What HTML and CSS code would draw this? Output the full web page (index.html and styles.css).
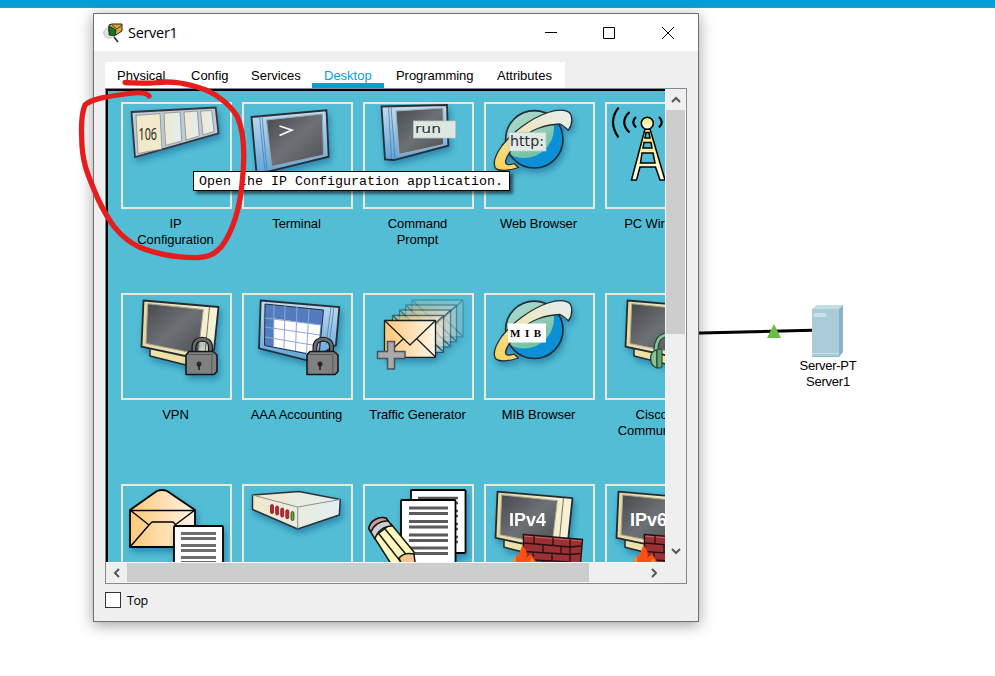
FILE: index.html
```
<!DOCTYPE html>
<html lang="en">
<head>
<meta charset="utf-8">
<title>Server1</title>
<link rel="stylesheet" href="styles.css">
</head>
<body>
<svg class="defs" width="0" height="0">
  <defs>
    <linearGradient id="screen" x1="0" y1="0" x2="1" y2="1"><stop offset="0" stop-color="#47494d"/><stop offset=".5" stop-color="#6d7074"/><stop offset="1" stop-color="#4d5053"/></linearGradient>
    <linearGradient id="blue" x1="0" y1="0" x2="0" y2="1"><stop offset="0" stop-color="#c2dcf1"/><stop offset="1" stop-color="#5ea5dc"/></linearGradient>
    <linearGradient id="cream" x1="0" y1="0" x2="1" y2="0"><stop offset="0" stop-color="#e6d8a4"/><stop offset="1" stop-color="#f8f3da"/></linearGradient>
    <linearGradient id="mail" x1="0" y1="0" x2="1" y2="0"><stop offset="0" stop-color="#ffc877"/><stop offset="1" stop-color="#fff4e8"/></linearGradient>
    <linearGradient id="box" x1="0" y1="0" x2="1" y2="0"><stop offset="0" stop-color="#f0e8cc"/><stop offset="1" stop-color="#e2eff2"/></linearGradient>
    <linearGradient id="ring" x1="0" y1="1" x2="1" y2="0"><stop offset="0" stop-color="#f8d14e"/><stop offset=".5" stop-color="#eee6bb"/><stop offset="1" stop-color="#e4eff3"/></linearGradient>
    <linearGradient id="sea" x1=".2" y1="0" x2=".7" y2="1"><stop offset="0" stop-color="#b5d8dc"/><stop offset=".5" stop-color="#9fd3bf"/><stop offset="1" stop-color="#6cc0a0"/></linearGradient>
    <linearGradient id="mast" x1="0" y1="0" x2="0" y2="1"><stop offset="0" stop-color="#f8e66d"/><stop offset="1" stop-color="#fffdf0"/></linearGradient>
    <clipPath id="ball"><circle cx="534.3" cy="139.3" r="28"/></clipPath>
    <g id="globe" stroke-linejoin="round">
      <circle cx="534.3" cy="139.3" r="28.7" fill="#0b8fd6"/>
      <circle cx="524" cy="128" r="30" fill="url(#sea)" clip-path="url(#ball)"/>
      <circle cx="534.3" cy="139.3" r="28.7" fill="none" stroke="#262c31" stroke-width="1.6"/>
      <path d="M571.3 116C570 109.5 560 108.5 548 112.5C530 118.500 512 133 502 145.500C496 154 492.500 163 495.500 168C499 171.800 510 170.500 518.500 167.500L514 163.500C509 165.500 505.500 165 505.500 161.500C507 154 514 146 522 138.500C530 130 545 124.500 560 124C563 125 566 128 568.300 130.300C571.500 126 572.500 121 571.300 116Z" fill="url(#ring)" stroke="#262c31" stroke-width="1.3"/>
    </g>
    <g id="monitor" stroke="#252a2e" stroke-linejoin="round">
      <path d="M150 348V356L190 366L206 360V346Z" fill="#eee0a9" stroke-width="1.500"/>
      <path d="M143.500 300.500L218.500 307L214 350L190 357L141.500 346.700Z" fill="url(#cream)" stroke-width="1.800"/>
      <path d="M147.700 303.700L203.300 309.500L198 354L146 343.500Z" fill="url(#screen)" stroke="#aaa78d" stroke-width="1"/>
      <path d="M209.500 306.500L205 353" stroke="#6b654f" stroke-width=".9" fill="none"/>
    </g>
    <g id="padlock" stroke="#171717">
      <path d="M194 354V347C194 336.500 210.500 336.500 210.500 347V354" fill="none" stroke-width="5"/>
      <path d="M194 354V347C194 336.500 210.500 336.500 210.500 347V354" fill="none" stroke="#696969" stroke-width="2.600"/>
      <path d="M189 351.500H213L217 355V371.500L214 374.500H186V355Z" fill="#808080" stroke-width="1.600" stroke-linejoin="round"/>
      <path d="M187 354.500H211.500L216 352.500M211.800 355V374" stroke="#4b4b4b" stroke-width=".8" fill="none"/>
      <circle cx="199" cy="364" r="2.500" fill="#292929" stroke="none"/><path d="M199 365V370" stroke-width="1.500"/>
    </g>
    <g id="firewall">
      <use href="#monitor" x="354" y="191.200"/>
      <text x="509" y="525.700" textLength="37" lengthAdjust="spacingAndGlyphs" class="ip-text">IPv4</text>
    </g>
    <g id="bricks">
      <path d="M523.300 534.500L582.500 539.500L580 570H524Z" fill="#9b3135" stroke="#221011" stroke-width="1.400"/>
      <path d="M524 536L582 541" stroke="#c0656a" stroke-width="1.200"/>
      <path d="M524 543L570 547L581 546M524 551.500L570 554.500L580 553.500M524 559.500L570 562M570 539V563M534 536V543.500M553 538V545.500M543 545V552M561 546.500V553.500M533 552V559.500M552 553.500V561M543 561V564" fill="none" stroke="#241112" stroke-width="1.300"/>
      <path d="M512 563L517 554L519 559C517 553 522 550 522 545C526 549 528 553 526 558L531 554L537 563Z" fill="#ff4f12"/>
      <path d="M512 563L516 556V563M529 563L532 558L535 563" fill="#ff8a28"/>
    </g>
  </defs>
</svg>

<div class="topbar"></div>

<svg class="network" width="200" height="60" viewBox="690 300 200 60">
  <path d="M690 333.300L812 330.300" stroke="#000" stroke-width="3"/>
  <path d="M774 324L781 338H767Z" fill="#69bd45"/>
  <path d="M812 309L817 305H843L839 309Z" fill="#c4dde5"/>
  <path d="M839 309L843 305V352L839 357Z" fill="#85b5c4"/>
  <path d="M812 309H839V357H812Z" fill="#aaccd8"/>
  <path d="M812 353.500H839" stroke="#c5dfe6" stroke-width="1"/>
  <path d="M812 356.500H839" stroke="#8abccc" stroke-width="1"/>
  <rect x="814" y="313" width="12" height="4" fill="#cae0e8"/>
</svg>
<div class="node-label">Server-PT<br>Server1</div>

<main class="window">
  <header class="titlebar">
    <svg class="app-icon" width="20" height="20" viewBox="103 22 20 20">
      <circle cx="109" cy="32" r="5.300" fill="#dfe3df" stroke="#c2c7c3"/>
      <path d="M109 24L112 23H122V30L116 34L109 31Z" fill="#d9a640" stroke="#252015" stroke-width="1"/>
      <path d="M112 24L117 28L122 24" fill="none" stroke="#5c451c"/>
      <path d="M109 25L116 29L115 35L109 34Z" fill="#147324" stroke="#0b2b10" stroke-width=".8"/>
      <path d="M114 36L118 41" stroke="#29343b" stroke-width="1.700"/>
    </svg>
    <h1>Server1</h1>
    <svg class="window-controls" width="132" height="20" viewBox="545 22 132 20" fill="none" stroke="#000" stroke-width="1">
      <path d="M545 31.500H557M603.500 26.500H614.500V37.500H603.500Z"/><path d="M662 26L674 38M674 26L662 38"/>
    </svg>
  </header>
  <section class="content">
    <nav class="tabs">
      <span>Physical</span><span>Config</span><span>Services</span><span class="active">Desktop</span><span>Programming</span><span>Attributes</span>
    </nav>
    <div class="panel">
      <div class="viewport">
        <div class="apps">
          <div class="app"><svg class="tile" viewBox="121 102 111 107">
            <g class="lift"><path d="M131.500 112L215.700 107.500L218.500 133.300L135 157Z" fill="#bdcbd8" stroke="#33383d" stroke-width="1.800"/>
            <g fill="url(#box)" stroke="#858a8c" stroke-width=".8"><path d="M136 115.500L160 113.500L162 149L138 153.500Z" fill="#f1e9ca"/><path d="M164 113.300L180 112L181.700 141L165.500 145.500Z"/><path d="M184 112L197.300 111L199.300 136L186 140Z"/><path d="M200.500 111L211.700 110.500L214 131.500L203 135Z"/></g></g>
            <text x="138.500" y="139.500" textLength="18.500" lengthAdjust="spacingAndGlyphs" class="number">106</text>
          </svg><p>IP<br>Configuration</p></div>
          <div class="app"><svg class="tile" viewBox="242 102 111 107">
            <g class="lift" stroke="#282e34"><path d="M251.500 117L326.500 110.300L328.700 156.700L268 171.500L256.500 173Z" fill="url(#blue)" stroke-width="1.800"/>
            <path d="M259.500 116.500L265 171M262 116L267 171" stroke="#5080a5" stroke-width=".8"/>
            <path d="M266.500 120L322.300 114L323.500 155L271.700 166.500Z" fill="url(#screen)" stroke="#9ba6ae"/></g>
            <path d="M279.500 126L292 130L279.500 135.500" fill="none" stroke="#fff" stroke-width="1.600"/>
          </svg><p>Terminal</p></div>
          <div class="app"><svg class="tile" viewBox="363 102 111 107">
            <g class="lift" stroke="#282e34"><path d="M381.500 106.500L447 105L448.300 145.700L394 160L385 159.500Z" fill="url(#blue)" stroke-width="1.800"/>
            <path d="M391 107L395 159M388.500 107L391.500 159" stroke="#537b98" stroke-width=".8"/>
            <path d="M396 111L443 108L443.500 144.500L399 154.500Z" fill="url(#screen)" stroke="#a8b0b6"/></g>
            <rect x="413.500" y="121" width="42" height="17" fill="#dfe8df" stroke="#b0c8cc" stroke-width=".8"/><text x="415" y="133" textLength="26" lengthAdjust="spacingAndGlyphs" class="run">run</text>
          </svg><p>Command<br>Prompt</p></div>
          <div class="app"><svg class="tile" viewBox="484 102 111 107">
            <use href="#globe" class="lift"/><rect x="509" y="132.500" width="37" height="18.500" fill="#e1ebe5" stroke="#b8c8c2" stroke-width=".8"/><text x="510" y="145.700" textLength="34" lengthAdjust="spacingAndGlyphs" class="http">http:</text>
          </svg><p>Web Browser</p></div>
          <div class="app"><svg class="tile" viewBox="605 102 111 107">
            <g fill="none" stroke="#000" stroke-width="2.200"><path d="M618.500 107.700Q607.500 122 618.500 137.500M629.500 112Q619 122 629.500 132.500M636 117Q630.500 122 636 127.500M659 117Q664.500 122 659 127.500M665.500 112Q675 122 665.500 132.500"/></g>
            <g stroke="#000" stroke-width="1.500" fill="url(#mast)"><path fill-rule="evenodd" d="M645 129H650L665 180H660L655.500 167H640L636.500 180H631.500ZM646 132.500L645 138H650L649 132.500ZM644 142.500L643 148H652L651 142.500ZM642 153L640.500 163H655L653 153Z"/><circle cx="647.300" cy="123.300" r="6"/></g>
          </svg><p>PC Wireless</p></div>

          <div class="app"><svg class="tile" viewBox="121 293 111 107"><use href="#monitor" class="lift"/><use href="#padlock" class="lift"/></svg><p>VPN</p></div>
          <div class="app"><svg class="tile" viewBox="242 293 111 107">
            <g class="lift" stroke="#282e34"><path d="M260.700 300.500L339.300 307L336 345L310 361L259 348.300Z" fill="url(#blue)" stroke-width="1.800"/><path d="M331 307L326 345M334 307L329 345" stroke="#557fa0" stroke-width=".8"/>
            <path d="M265 304L323.500 310L319 356L264.500 345.500Z" fill="#527cc0" stroke-width="1"/></g>
            <path d="M274 318.500L320.500 325L317.500 355L273.500 346.500Z" fill="#fff"/>
            <path d="M274 305L273.500 347M285 306L284 349M297 307L295.500 351M309 309L306.500 354M265 318L321 325M265 327L320 335M265 337L318 346" stroke="#91a7d3" fill="none" stroke-width="1"/>
            <use href="#padlock" x="121"/>
          </svg><p>AAA Accounting</p></div>
          <div class="app"><svg class="tile" viewBox="363 293 111 107">
            <defs><g id="envelope"><path d="M384.500 320.500H435.500V357.300H384.500Z" fill="url(#mail)"/><path d="M384.500 320.500L410 345L435.500 320.500M384.500 357L403 339M435.500 357L417 339" fill="none"/></g></defs>
            <g class="lift" stroke="#16201f" stroke-width="1.300" stroke-linejoin="round"><use href="#envelope" x="27.500" y="-20.500" opacity=".22"/><use href="#envelope" x="21" y="-15.500" opacity=".3"/><use href="#envelope" x="15" y="-10.500" opacity=".4"/><use href="#envelope" x="8" y="-5" opacity=".55"/><use href="#envelope"/></g>
            <path d="M387.500 341.500H394.500V351.500H405V358.500H394.500V369H387.500V358.500H377.500V351.500H387.500Z" fill="#aaa" stroke="#49525a" stroke-width="1.500"/>
          </svg><p>Traffic Generator</p></div>
          <div class="app"><svg class="tile" viewBox="484 293 111 107"><use href="#globe" y="190.500" class="lift"/><rect x="508" y="323.500" width="38" height="19" fill="#fff"/><text x="510" y="337" textLength="31" class="mib">MIB</text></svg><p>MIB Browser</p></div>
          <div class="app"><svg class="tile" viewBox="605 293 111 107">
            <use href="#monitor" x="484" class="lift"/><path d="M656 350C656 341 659 335 670 334" fill="none" stroke="#204a38" stroke-width="5"/><path d="M656 350C656 341 659 335 670 334" fill="none" stroke="#8ac39a" stroke-width="2.800"/>
            <path d="M657 350C649 350 648 365 657 368Z" fill="#8bc396" stroke="#214b37" stroke-width="1.300"/><rect x="657" y="349" width="5" height="19" rx="2" fill="#65a375" stroke="#193d2a"/>
          </svg><p>Cisco IP<br>Communicator</p></div>

          <div class="app"><svg class="tile" viewBox="121 484 111 107">
            <g class="lift" stroke="#000" stroke-width="1.800" stroke-linejoin="round"><path d="M130 510L157 491Q162 489 167 491L195 510V547H130Z" fill="url(#mail)"/><path d="M130 510.500H195M130 510L149 525L130 547M195 510L175 525L195 547M149 525L152 522H173L176 525" fill="none" stroke-width="1.400"/></g>
            <g class="lift"><rect x="174" y="526" width="49" height="60" rx="1" fill="#fff" stroke="#000" stroke-width="1.800"/></g><path d="M181 533.500H216M181 538.500H216M181 545.500H216M181 550.500H216M181 557.500H216M181 562.500H216" stroke="#6d6d6d" stroke-width="3"/>
          </svg></div>
          <div class="app"><svg class="tile" viewBox="242 484 111 107"><g class="lift" stroke="#2c3337" stroke-width="1.500" stroke-linejoin="round"><path d="M252.500 495L299 491.500L340.300 499.500L339.300 515L297.700 529L252.500 509.500Z" fill="url(#box)"/><path d="M252.500 495L297.700 507L340 499.500M297.700 507V529" stroke="#8b918b" stroke-width="1" fill="none"/></g>
            <g fill="#d51e2b" stroke="#571c21" stroke-width=".7"><rect x="270.500" y="504.500" width="3" height="9" rx="1.500"/><rect x="275.600" y="506" width="3" height="9" rx="1.500"/><rect x="280.700" y="508" width="3" height="9" rx="1.500"/><rect x="285.800" y="509.700" width="3" height="9" rx="1.500"/><rect x="291" y="511.500" width="3" height="9" rx="1.500" fill="#43b72d"/></g>
          </svg></div>
          <div class="app"><svg class="tile" viewBox="363 484 111 107">
            <g class="lift" fill="#fff" stroke="#000" stroke-width="1.800"><rect x="411" y="490" width="54.500" height="63" rx="1"/><path d="M418 498H458M418 503H458M418 511H458M418 516H458M418 524H458M418 529H458M418 537H458M418 542H458" stroke="#555" stroke-width="2.500"/><rect x="401" y="500" width="54.500" height="70" rx="1"/></g>
            <path d="M409 508H448M409 513.500H448M409 521.500H448M409 527H448M409 535H448M409 540.500H448M409 548H448M409 553.500H448" stroke="#5b5b5b" stroke-width="3"/>
            <g stroke="#171717" stroke-width="1.500" stroke-linejoin="round"><path d="M374 537L391 524L414 552V570H395Z" fill="#fff8bd"/><path d="M379 534L404 566M385 529L409 558" fill="none"/><path d="M399 558Q404 552 414 554L416 570H404Z" fill="#f7c28f"/><path d="M369 529C369 521 379 516 386 518L392 526C384 526 377 531 375 539Z" fill="#cfcfd2"/><path d="M369 529C369 521 379 516 386 518L388 521C380 520 373 526 371 532Z" fill="#ca9c9a"/></g>
          </svg></div>
          <div class="app"><svg class="tile" viewBox="484 484 111 107"><use href="#firewall" class="lift"/><use href="#bricks"/></svg></div>
          <div class="app"><svg class="tile" viewBox="605 484 111 107"><use href="#monitor" x="475" y="191.200" class="lift"/><text x="630" y="525.700" textLength="37" lengthAdjust="spacingAndGlyphs" class="ip-text">IPv6</text><use href="#bricks" x="121"/></svg></div>
        </div>
      </div>
      <div class="scroll-y"><i class="arrow"><svg width="10" height="7" viewBox="0 0 10 7"><path d="M1 6L5 2L9 6"/></svg></i><div class="thumb-y"></div><i class="arrow end"><svg width="10" height="7" viewBox="0 0 10 7"><path d="M1 1L5 5L9 1"/></svg></i></div>
      <div class="scroll-x"><i class="arrow"><svg width="7" height="10" viewBox="0 0 7 10"><path d="M6 1L2 5L6 9"/></svg></i><div class="thumb-x"></div><i class="arrow end"><svg width="7" height="10" viewBox="0 0 7 10"><path d="M1 1L5 5L1 9"/></svg></i></div>
      <div class="corner"></div>
    </div>
    <label class="top-option"><span class="checkbox"></span>Top</label>
  </section>
</main>
<div class="tooltip">Open the IP Configuration application.</div>
<svg class="marker" width="180" height="190" viewBox="75 75 180 190"><path d="M125 82.500C138 83 149 84 158 82.500C172 81 182 83 197 87C216 92 230 105 237 116C245 133 245 158 242 184C240 207 233 231 222 246C214 255 208 257 198 257.500C179 258 161 256 139 247C119 237 109 222 98 199C88 175 82 164 81.700 138C81 122 82 112 85 105C92 99 105 97 122 94.500C136 92 146 92 149 96"/></svg>
</body>
</html>
```
FILE: styles.css
```
* { box-sizing: border-box; }
body { margin: 0; width: 995px; height: 676px; overflow: hidden; position: relative; background: #fff; color: #000; font-family: "Liberation Sans", sans-serif; font-size: 13px; }
.defs { position: absolute; }
.topbar { height: 8px; background: #049fd9; border-bottom: 1px solid #4b91ad; }
.window { width: 606px; height: 609px; margin: 5px 0 0 93px; border: 1px solid #707070; background: #efefef; box-shadow: 0 3px 14px rgba(0,0,0,.38); position: relative; }
.titlebar { height: 37px; background: #fff; display: flex; align-items: center; padding: 0 21px 0 9px; }
.titlebar h1 { margin: 0 auto 0 5px; font: 14.5px/20px "Open Sans", sans-serif; letter-spacing: -.3px; }
.content { padding: 11px; }
.tabs { width: 460px; height: 26px; background: #fff; display: flex; }
.tabs span { padding: 6px 12px 0; line-height: 16px; white-space: nowrap; }
.tabs span:nth-child(1) { width: 74px; }
.tabs span:nth-child(2) { width: 60px; }
.tabs span:nth-child(3) { width: 73px; }
.tabs span:nth-child(4) { width: 72px; }
.tabs span:nth-child(5) { width: 101px; letter-spacing: -.05px; }
.tabs .active { color: #049fd9; border-bottom: 5px solid #049fd9; }
.panel { width: 582px; height: 496px; border: 1px solid #828790; display: grid; grid-template: 473px 21px / 559px 21px; }
.viewport { overflow: hidden; border: solid #000; border-width: 2px 0 0 2px; background: #53bdd5; }
.apps { width: 700px; padding: 11px 13px; display: grid; grid-template-columns: repeat(5, 111px); grid-auto-rows: 191px; column-gap: 10px; }
.tile { display: block; width: 111px; height: 107px; box-shadow: inset 0 0 0 2px #eae9d8; }
.app p { margin: 7px -4px 0 -6px; text-align: center; line-height: 16px; font-size: 13px; letter-spacing: -.07px; white-space: nowrap; }
.lift { filter: drop-shadow(2px 4px 3px rgba(0,74,130,.45)); }
.number { font: 16px "Noto Sans", sans-serif; fill: #282622; }
.run { font: 13px "DejaVu Sans", sans-serif; fill: #292d32; }
.http { font: 14px "DejaVu Sans", sans-serif; fill: #292d32; }
.mib { font: bold 11px "Liberation Serif", serif; }
.ip-text { font: bold 18px "Liberation Sans", sans-serif; fill: #fff; }
.scroll-y { border: 1px solid #f7f7f7; border-width: 0 1px; background: #efefef; display: flex; flex-direction: column; }
.scroll-x { border: 1px solid #f7f7f7; border-width: 1px 0; background: #efefef; display: flex; }
.arrow { flex: 0 0 21px; display: flex; align-items: center; justify-content: center; }
.arrow svg { fill: none; stroke: #555; stroke-width: 2; }
.thumb-y { height: 224px; background: #cdcdcd; }
.thumb-x { width: 462px; background: #cdcdcd; }
.end { margin-top: auto; }
.scroll-x .end { margin: 0 0 0 auto; }
.corner { background: #efefef; }
.top-option { display: flex; align-items: center; margin-top: 8px; height: 16px; font: 12.5px "Open Sans", sans-serif; letter-spacing: -.4px; }
.checkbox { width: 16px; height: 16px; border: 1px solid #333; background: #fff; margin-right: 6px; }
.network { position: absolute; left: 690px; top: 300px; }
.node-label { position: absolute; left: 788px; top: 358px; width: 80px; text-align: center; line-height: 16px; letter-spacing: -.25px; }
.tooltip { position: absolute; left: 193px; top: 171px; width: 317px; height: 20px; padding-left: 5px; border: 1px solid #000; background: #fff; box-shadow: 3px 3px 3px rgba(0,0,0,.55); font: 13.33px/19px "Liberation Mono", monospace; white-space: nowrap; }
.marker { position: absolute; left: 75px; top: 75px; fill: none; stroke: #e61d1d; stroke-width: 5.3; stroke-linecap: round; stroke-linejoin: round; }
```
